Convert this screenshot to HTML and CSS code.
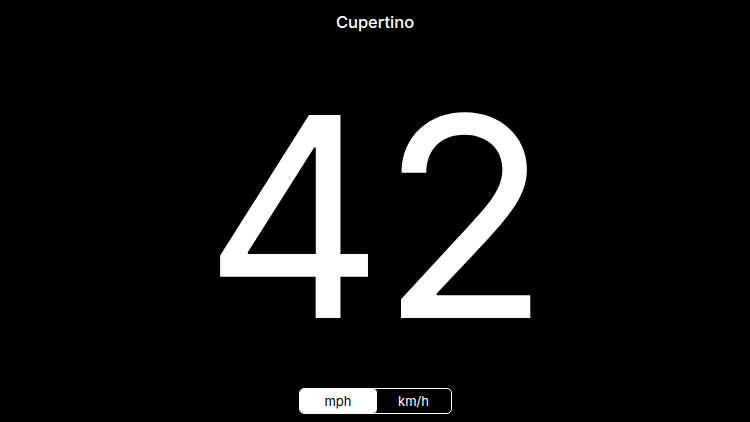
FILE: index.html
```html
<!DOCTYPE html>
<html>
<head>
<meta charset="utf-8">
<link rel="stylesheet" href="styles.css">
</head>
<body>
<div class="screen">
  <div class="title">Cupertino</div>
  <div class="speed">42</div>
  <div class="segmented">
    <div class="seg active">mph</div>
    <div class="seg">km/h</div>
  </div>
</div>
</body>
</html>
```
FILE: styles.css
```css
html, body {
  margin: 0;
  padding: 0;
  background: #000;
}
.screen {
  width: 750px;
  height: 422px;
  display: flex;
  flex-direction: column;
  align-items: center;
  color: #fff;
  font-family: Inter, "Noto Sans", sans-serif;
  overflow: hidden;
}
.title {
  margin-top: 12px;
  font-size: 16.5px;
  font-weight: 500;
  line-height: 20px;
}
.speed {
  margin-top: 83px;
  font-size: 279px;
  font-weight: 400;
  line-height: 203px;
  letter-spacing: -4px;
  height: 203px;
}
.segmented {
  margin-top: 70px;
  display: flex;
  width: 153px;
  height: 26px;
  box-sizing: border-box;
  border: 1px solid #fff;
  border-radius: 5px;
  overflow: hidden;
}
.seg {
  flex: 1;
  display: flex;
  align-items: center;
  justify-content: center;
  font-size: 13px;
  color: #fff;
}
.seg.active {
  flex: 0 0 77px;
  background: #fff;
  color: #000;
  border-radius: 4px;
}
```
